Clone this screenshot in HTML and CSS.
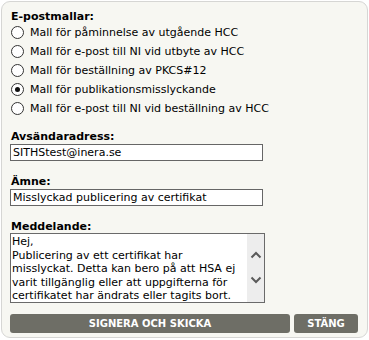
FILE: index.html
```html
<!DOCTYPE html>
<html lang="sv">
<head>
<meta charset="utf-8">
<title>E-postmallar</title>
<link rel="stylesheet" href="styles.css">
</head>
<body>
<div class="panel">
  <div class="label first">E-postmallar:</div>
  <div class="radios">
    <label class="radio"><input type="radio" name="mall"><span>Mall för påminnelse av utgående HCC</span></label>
    <label class="radio"><input type="radio" name="mall"><span>Mall för e-post till NI vid utbyte av HCC</span></label>
    <label class="radio"><input type="radio" name="mall"><span>Mall för beställning av PKCS#12</span></label>
    <label class="radio"><input type="radio" name="mall" checked><span>Mall för publikationsmisslyckande</span></label>
    <label class="radio"><input type="radio" name="mall"><span>Mall för e-post till NI vid beställning av HCC</span></label>
  </div>
  <div class="label gap1">Avsändaradress:</div>
  <input class="field" type="text" value="SITHStest@inera.se">
  <div class="label gap2">Ämne:</div>
  <input class="field" type="text" value="Misslyckad publicering av certifikat">
  <div class="label gap2">Meddelande:</div>
  <div class="msgbox">
    <textarea class="msg" wrap="off">Hej,
Publicering av ett certifikat har
misslyckat. Detta kan bero på att HSA ej
varit tillgänglig eller att uppgifterna för
certifikatet har ändrats eller tagits bort.</textarea>
    <div class="scroll">
      <svg class="chev" width="12" height="8" viewBox="0 0 12 8"><path d="M1.5 6.5 L6 2 L10.5 6.5" fill="none" stroke="#5a5a5a" stroke-width="2"/></svg>
      <svg class="chev" width="12" height="8" viewBox="0 0 12 8"><path d="M1.5 1.5 L6 6 L10.5 1.5" fill="none" stroke="#5a5a5a" stroke-width="2"/></svg>
    </div>
  </div>
  <div class="buttons">
    <button class="btn wide" type="button">SIGNERA OCH SKICKA</button>
    <button class="btn small" type="button">STÄNG</button>
  </div>
</div>
</body>
</html>
```
FILE: styles.css
```css
html, body {
  margin: 0;
  padding: 0;
  background: #ffffff;
}
body {
  font-family: "DejaVu Sans", Verdana, sans-serif;
  font-size: 11px;
  color: #000;
}
.panel {
  box-sizing: border-box;
  width: 367px;
  height: 337px;
  margin: 1px 0 0 1px;
  border: 1px solid #d6d6d4;
  border-radius: 9px;
  background: #f7f7f2;
  padding: 9px 8px 0 8px;
  display: flex;
  flex-direction: column;
  align-items: flex-start;
}
.label {
  font-weight: bold;
  line-height: 12px;
  margin-left: 1px;
}
.gap1 { margin-top: 13px; }
.gap2 { margin-top: 15px; }
.radios {
  display: flex;
  flex-direction: column;
  margin-left: 1px;
}
.radio {
  display: flex;
  align-items: center;
  height: 19px;
  gap: 6px;
}
.radio input {
  appearance: none;
  -webkit-appearance: none;
  box-sizing: border-box;
  width: 13px;
  height: 13px;
  margin: 0;
  border: 1px solid #333;
  border-radius: 50%;
  background: #fff;
  display: grid;
  place-items: center;
}
.radio input:checked::before {
  content: "";
  width: 5px;
  height: 5px;
  border-radius: 50%;
  background: #111;
}
.field {
  box-sizing: border-box;
  width: 253px;
  height: 17px;
  margin: 1px 0 0 0;
  padding: 0 2px;
  border: 1px solid #666;
  background: #fff;
  font-family: "DejaVu Sans", Verdana, sans-serif;
  font-size: 11px;
  color: #000;
  outline: none;
}
.msgbox {
  box-sizing: border-box;
  width: 255px;
  height: 70px;
  margin-top: 0;
  border: 1px solid #6a6a6a;
  background: #fff;
  display: flex;
}
.msg {
  flex: 1;
  min-width: 0;
  border: none;
  margin: 0;
  padding: 1px 1px 0 1px;
  resize: none;
  overflow: hidden;
  font-family: "DejaVu Sans", Verdana, sans-serif;
  font-size: 11px;
  line-height: 13.6px;
  color: #000;
  background: #fff;
  outline: none;
}
.scroll {
  width: 17px;
  background: #ededed;
  display: flex;
  flex-direction: column;
  align-items: center;
  justify-content: center;
  gap: 17px;
  padding-bottom: 1px;
}
.chev { display: block; }
.buttons {
  display: flex;
  gap: 4px;
  margin-top: 11px;
}
.btn {
  height: 19px;
  border: none;
  border-radius: 3px;
  background: #6e6e66;
  color: #fff;
  font-family: "DejaVu Sans", Verdana, sans-serif;
  font-weight: bold;
  font-size: 10px;
  padding: 0;
}
.wide { width: 280px; }
.small { width: 64px; }
```
